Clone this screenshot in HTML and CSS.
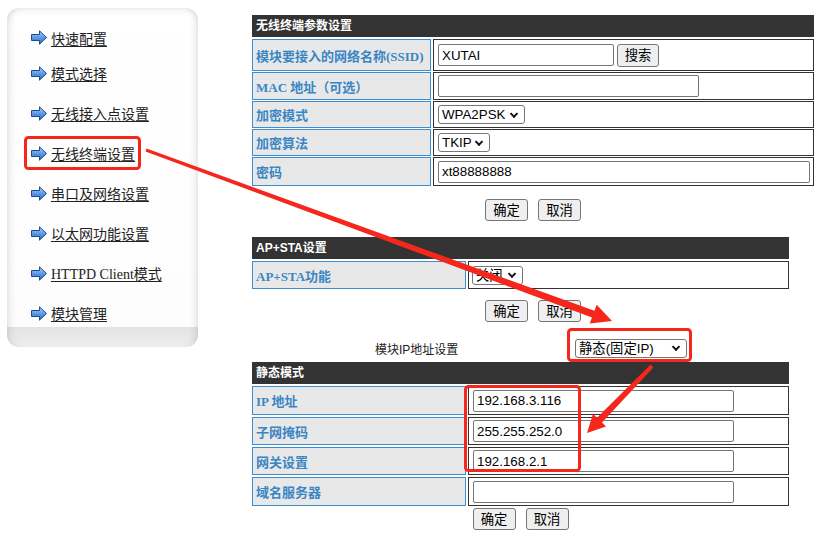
FILE: index.html
```html
<!DOCTYPE html>
<html lang="zh-CN">
<head>
    <meta charset="utf-8">
    <title>无线终端设置</title>
    <link rel="stylesheet" href="styles.css">
</head>
<body>
<svg width="0" height="0" class="defs">
    <defs>
        <linearGradient id="arrowFill" x1="0" y1="0" x2="0" y2="1">
            <stop offset="0" stop-color="#a9d2f7"/>
            <stop offset="0.5" stop-color="#5c9be3"/>
            <stop offset="1" stop-color="#2c66c2"/>
        </linearGradient>
        <symbol id="go" viewBox="0 0 16 15">
            <path d="M0.5 4.5 H8.5 V0.8 L15.5 7.5 L8.5 14.2 V10.5 H0.5 Z" fill="url(#arrowFill)" stroke="#1d4a98" stroke-width="1" stroke-linejoin="round"/>
        </symbol>
    </defs>
</svg>

<div class="page">
    <!-- Left menu -->
    <div class="side">
        <ul class="menu">
            <li><a href="#"><svg class="ico"><use href="#go"/></svg><span>快速配置</span></a></li>
            <li><a href="#"><svg class="ico"><use href="#go"/></svg><span>模式选择</span></a></li>
            <li><a href="#"><svg class="ico"><use href="#go"/></svg><span>无线接入点设置</span></a></li>
            <li><a href="#"><svg class="ico"><use href="#go"/></svg><span>无线终端设置</span></a></li>
            <li><a href="#"><svg class="ico"><use href="#go"/></svg><span>串口及网络设置</span></a></li>
            <li><a href="#"><svg class="ico"><use href="#go"/></svg><span>以太网功能设置</span></a></li>
            <li><a href="#"><svg class="ico"><use href="#go"/></svg><span>HTTPD Client模式</span></a></li>
            <li><a href="#"><svg class="ico"><use href="#go"/></svg><span>模块管理</span></a></li>
        </ul>
    </div>

    <!-- Settings -->
    <div class="main">
        <div class="block wide">
            <div class="head">无线终端参数设置</div>
            <div class="row h32">
                <div class="lab">模块要接入的网络名称(SSID)</div>
                <div class="val"><input class="in-ssid" type="text" value="XUTAI"><button class="search">搜索</button></div>
            </div>
            <div class="row h28">
                <div class="lab">MAC 地址（可选）</div>
                <div class="val"><input class="in-mac" type="text" value=""></div>
            </div>
            <div class="row h27">
                <div class="lab">加密模式</div>
                <div class="val"><span class="dd"><select class="sel-mode"><option>WPA2PSK</option></select></span></div>
            </div>
            <div class="row h27">
                <div class="lab">加密算法</div>
                <div class="val"><span class="dd"><select class="sel-alg"><option>TKIP</option></select></span></div>
            </div>
            <div class="row h29">
                <div class="lab">密码</div>
                <div class="val"><input class="in-pwd" type="text" value="xt88888888"></div>
            </div>
        </div>
        <div class="btns wide first">
            <button>确定</button>
            <button>取消</button>
        </div>

        <div class="block narrow apsta">
            <div class="head">AP+STA设置</div>
            <div class="row h28">
                <div class="lab">AP+STA功能</div>
                <div class="val tight"><span class="dd"><select class="sel-off"><option>关闭</option></select></span></div>
            </div>
        </div>
        <div class="btns wide second">
            <button>确定</button>
            <button>取消</button>
        </div>

        <div class="iprow narrow">
            <span class="iplab">模块IP地址设置</span>
            <span class="dd"><select class="sel-ip"><option>静态(固定IP)</option></select></span>
        </div>

        <div class="block narrow static">
            <div class="head">静态模式</div>
            <div class="row h29">
                <div class="lab">IP 地址</div>
                <div class="val"><input class="in-ip" type="text" value="192.168.3.116"></div>
            </div>
            <div class="row h28">
                <div class="lab">子网掩码</div>
                <div class="val"><input class="in-ip" type="text" value="255.255.252.0"></div>
            </div>
            <div class="row h28">
                <div class="lab">网关设置</div>
                <div class="val"><input class="in-ip" type="text" value="192.168.2.1"></div>
            </div>
            <div class="row h29">
                <div class="lab">域名服务器</div>
                <div class="val"><input class="in-ip" type="text" value=""></div>
            </div>
        </div>
        <div class="btns narrow third">
            <button>确定</button>
            <button>取消</button>
        </div>
    </div>

    <!-- Red annotations -->
    <svg class="marks" viewBox="0 0 819 535">
        <rect x="25.5" y="137.5" width="114" height="31" rx="3"/>
        <rect x="568.5" y="329.5" width="122" height="31" rx="3"/>
        <rect x="465.5" y="386.5" width="114" height="84" rx="3"/>
        <polygon class="fill" points="146.5,148.6 594.4,310.8 596.7,304.7 612,321 589.7,323.5 592,317.4 145.5,151.4"/>
        <polygon class="fill" points="653.4,367.4 602.0,422.5 606,426.4 587,433 593,413.8 597.0,417.7 650.6,364.6"/>
    </svg>
</div>
</body>
</html>
```

FILE: styles.css
```css
/* Base */
body {
    margin: 0;
    background: #fff;
    color: #333;
    font-family: "Liberation Sans", "Noto Sans CJK SC", sans-serif;
    font-size: 12px;
}

.defs {
    position: absolute;
}

.page {
    position: relative;
    display: flex;
    align-items: flex-start;
    width: 819px;
    height: 535px;
    overflow: hidden;
}

/* Left menu panel */
.side {
    margin: 8px 0 0 7px;
    width: 191px;
    height: 339px;
    border-radius: 12px;
    background: linear-gradient(to bottom, #ffffff 0, #fdfdfd 94%, #e3e3e3 94.2%, #eeeeee 100%);
    box-shadow: inset 8px 0 10px -8px rgba(0, 0, 0, 0.18),
                inset -8px 0 10px -8px rgba(0, 0, 0, 0.18),
                inset 0 6px 8px -6px rgba(0, 0, 0, 0.12);
}

.menu {
    list-style: none;
    margin: 0;
    padding: 14px 0 0 24px;
}

.menu li {
    height: 40px;
    display: flex;
    align-items: center;
}

.menu li:first-child {
    height: 31px;
}

.menu a {
    display: flex;
    align-items: center;
    color: #222;
    text-decoration: none;
    font-family: "Liberation Serif", "Noto Sans CJK SC", serif;
    font-size: 14px;
}

.menu a span {
    text-decoration: underline;
    text-underline-offset: 2px;
}

.ico {
    width: 16px;
    height: 15px;
    margin-right: 4px;
}

/* Settings column */
.main {
    margin-left: 54px;
    padding-top: 15px;
}

.wide {
    width: 562px;
}

.narrow {
    width: 537px;
}

.head {
    box-sizing: border-box;
    height: 22px;
    line-height: 22px;
    padding-left: 4px;
    margin-bottom: 2px;
    background: #333;
    color: #fff;
    font-weight: bold;
    font-size: 12px;
}

.row {
    display: flex;
    gap: 2px;
    margin-bottom: 1px;
}

.static .row {
    margin-bottom: 2px;
}

.h32 { height: 32px; }
.h29 { height: 29px; }
.h28 { height: 28px; }
.h27 { height: 27px; }

.lab {
    box-sizing: border-box;
    display: flex;
    align-items: center;
    padding-left: 3px;
    border: 1px solid #3b8fd0;
    background: #e8e8e8;
    color: #3a86c4;
    font-family: "Liberation Serif", "Noto Sans CJK SC", serif;
    font-weight: bold;
    font-size: 13px;
}

.wide .lab {
    width: 179px;
}

.narrow .lab {
    width: 214px;
}

.val {
    box-sizing: border-box;
    flex: 1;
    display: flex;
    align-items: center;
    padding-left: 4px;
    border: 1px solid #333;
}

.val.tight {
    padding-left: 3px;
}

/* Form controls */
input {
    box-sizing: border-box;
    height: 22px;
    margin: 0;
    padding: 1px 3px;
    border: 1px solid #767676;
    border-radius: 2px;
    color: #000;
    font: 13.333px "Liberation Sans", sans-serif;
}

.in-ssid { width: 176px; }
.in-mac { width: 261px; }
.in-pwd { width: 372px; }
.in-ip { width: 261px; }

.dd {
    position: relative;
    display: inline-flex;
}

.dd::after {
    content: '';
    position: absolute;
    right: 8px;
    top: 50%;
    width: 4px;
    height: 4px;
    border-right: 2px solid #111;
    border-bottom: 2px solid #111;
    transform: translateY(-70%) rotate(45deg);
    pointer-events: none;
}

select {
    appearance: none;
    box-sizing: border-box;
    height: 19px;
    margin: 0;
    padding: 0 16px 0 3px;
    border: 1px solid #767676;
    border-radius: 3px;
    background: #fff;
    color: #000;
    font: 13.333px "Liberation Sans", "Noto Sans CJK SC", sans-serif;
    line-height: 17px;
}

.sel-mode { width: 87px; }
.sel-alg { width: 52px; }
.sel-off { width: 51px; }
.sel-ip { width: 112px; }

button {
    box-sizing: border-box;
    width: 43px;
    height: 22px;
    padding: 0;
    border: 1px solid #767676;
    border-radius: 3px;
    background: #efefef;
    color: #000;
    font: 13.333px "Noto Sans CJK SC", sans-serif;
    line-height: 18px;
}

.search {
    width: 42px;
    height: 23px;
    margin-left: 3px;
}

.btns {
    display: flex;
    justify-content: center;
    gap: 10px;
}

.btns.first { margin-top: 13px; }
.btns.second { margin-top: 11px; }
.btns.third { margin-top: 2px; }

.apsta {
    margin-top: 16px;
}

/* IP mode row */
.iprow {
    display: flex;
    align-items: center;
    height: 24px;
    margin-top: 14px;
    margin-bottom: 2px;
}

.iplab {
    width: 200px;
    margin-left: 123px;
    font-family: "Liberation Sans", "Noto Sans CJK SC", sans-serif;
    font-size: 12px;
    color: #222;
}

/* Annotations */
.marks {
    position: absolute;
    left: 0;
    top: 0;
    width: 819px;
    height: 535px;
    pointer-events: none;
}

.marks rect {
    fill: none;
    stroke: #f5261c;
    stroke-width: 3;
}

.marks .fill {
    fill: #f5261c;
}
```
